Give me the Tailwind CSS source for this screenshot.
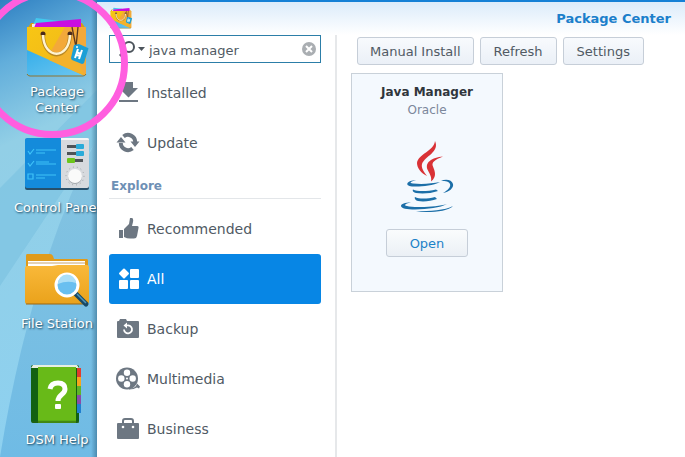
<!DOCTYPE html>
<html lang="en">
<head>
<meta charset="utf-8">
<meta name="viewport" content="width=device-width, initial-scale=1">
<title>Package Center</title>
<script src="https://cdn.jsdelivr.net/npm/@tailwindcss/browser@4"></script>
</head>
<body class="relative flex h-screen overflow-hidden bg-[#74bbe2] font-['DejaVu_Sans',Verdana,sans-serif] text-[#505a64]">

<!-- Reusable shopping bag artwork -->
<svg class="absolute size-0" aria-hidden="true">
  <defs>
    <linearGradient id="bagGold" x1="0" y1="0" x2="1" y2="1"><stop offset="0" stop-color="#f8c614"/><stop offset="1" stop-color="#eeb51c"/></linearGradient>
    <linearGradient id="bagBlue" x1="0" y1="0" x2="1" y2="1"><stop offset="0" stop-color="#35aeea"/><stop offset="1" stop-color="#6dc6f0"/></linearGradient>
  </defs>
  <symbol id="bag" viewBox="0 0 68 68">
    <path d="M4 13 8 7h51l4 6z" fill="#d89c12"/>
    <path d="M13 2 37 5 32 12H9z" fill="#43c8ee"/>
    <path d="M9 8 57 5l1 7H9z" fill="#f4eee6"/>
    <path d="M13 7 58 3v9H11z" fill="#c90fe0"/>
    <path d="M4 11h59v46q0 3-3 3H7q-3 0-3-3z" fill="url(#bagGold)"/>
    <path d="M42 11h21v46q0 3-3 3L28 35z" fill="#f3a93a"/>
    <path d="M4 34 62 60H7q-3 0-3-3z" fill="url(#bagBlue)"/>
    <path d="M26 44 48 31l14 29z" fill="#f3b22c"/>
    <path d="M4 58q1 2 3 2h53q2 0 3-2" fill="none" stroke="#8d7432" stroke-width="1"/>
    <circle cx="20" cy="18" r="2.500" fill="#4b2a1a"/><circle cx="47" cy="18" r="2.500" fill="#4b2a1a"/>
    <path d="M20 19c1 26 26 26 27 0" fill="none" stroke="#b88824" stroke-width="4"/>
    <path d="M20 19c1 25 26 25 27 0" fill="none" stroke="#fff3d2" stroke-width="2.500"/>
    <path d="M49 11 53 31 55 11" fill="none" stroke="#5b3a20" stroke-width="1.300"/>
    <path d="m51 29 5-1 9 4q1 0 0 2l-4 13q-1 1-2 1l-10-4q-1-1-1-2z" fill="#1b9fd6"/>
    <path d="m55 33-3 9m7-8-3 9m-3-7 5 2m-5 1 5 1" stroke="#fff" stroke-width="2" fill="none"/>
    <circle cx="54" cy="31" r="1" fill="#fff"/>
  </symbol>
</svg>

<!-- Desktop shortcuts -->
<aside class="relative w-[97px] shrink-0 overflow-hidden">
  <svg class="absolute inset-0 h-full w-full" viewBox="0 0 97 457" preserveAspectRatio="none" aria-hidden="true">
    <defs>
      <linearGradient id="skyA" x1="0" y1="0" x2=".1" y2="1"><stop offset="0" stop-color="#2f80c2"/><stop offset=".14" stop-color="#62aedb"/><stop offset=".32" stop-color="#92cfe6"/><stop offset="1" stop-color="#8ed1f0"/></linearGradient>
      <linearGradient id="skyB" x1="0" y1="0" x2="0" y2="1"><stop offset="0" stop-color="#86c4e0"/><stop offset="1" stop-color="#6fbbe5"/></linearGradient>
      <linearGradient id="edge"><stop offset="0" stop-color="#20506e" stop-opacity="0"/><stop offset="1" stop-color="#20506e" stop-opacity=".45"/></linearGradient>
    </defs>
    <path d="M0 0h97v457H0z" fill="url(#skyA)"/>
    <path d="M97 90 0 188v98L97 140z" fill="#7fc4e2" opacity=".8"/>
    <path d="M97 138Q30 270 0 457h97z" fill="url(#skyB)"/>
    <path d="M91 0h6v457h-6z" fill="url(#edge)"/>
  </svg>
  <ul class="relative w-[114px] pt-4 text-center text-[13px] leading-4 text-white [text-shadow:1px_1px_2px_#123c55]">
    <li class="h-[116px]"><a href="#package-center" class="flex flex-col items-center">
      <svg class="size-[68px]" aria-hidden="true"><use href="#bag"/></svg>
      <span class="w-16">Package Center</span></a></li>
    <li class="h-[116px]"><a href="#control-panel" class="flex flex-col items-center">
      <svg class="size-[68px]" viewBox="0 0 68 68" aria-hidden="true">
        <rect x="2" y="7" width="64" height="51" rx="2" fill="#27506b"/>
        <path d="M4 6h34v50H4q-2 0-2-2V8q0-2 2-2z" fill="#148bdb"/>
        <path d="M38 6h26q2 0 2 2v46q0 2-2 2H38z" fill="#d7dade"/>
        <path d="M38 6h26q2 0 2 2H38z" fill="#f4f6f7"/>
        <g fill="none" stroke="#3fc3f8" stroke-width="1.200"><path d="m5 19 2 3 4-5M5 31l2 3 4-5M5 42h5v5H5zM13 18h20M13 21h9M13 30h13M13 32h20M13 43h20M13 46h9"/></g>
        <path d="M44 13h16v3H44zm0 7h16v3H44zm0 7h16v3H44z" fill="#4e5357"/>
        <rect x="53" y="12" width="8" height="5" rx="1" fill="#2aabd9"/><rect x="53" y="19" width="8" height="5" rx="1" fill="#2aabd9"/><rect x="44" y="26" width="8" height="5" rx="1" fill="#6cc51c"/>
        <circle cx="52" cy="44" r="9" fill="none" stroke="#9da2a7" stroke-width="1" stroke-dasharray="1 3"/>
        <circle cx="52" cy="45" r="7" fill="#a4a9ad"/><circle cx="52" cy="44" r="7" fill="#fafafa"/>
      </svg>
      <span class="whitespace-nowrap">Control Panel</span></a></li>
    <li class="h-[116px]"><a href="#file-station" class="flex flex-col items-center">
      <svg class="size-[68px]" viewBox="0 0 68 68" aria-hidden="true">
        <defs><linearGradient id="fold" x1="0" y1="0" x2="0" y2="1"><stop offset="0" stop-color="#f9b93a"/><stop offset="1" stop-color="#eaa21b"/></linearGradient></defs>
        <path d="M4 6h23q2 0 3 2l1 3h33q1 0 1 2v10H3V8q0-2 1-2z" fill="#e09b1b"/>
        <path d="M5 13h57v6H5z" fill="#fff"/><path d="M5 15h57" stroke="#c8a46c"/>
        <path d="M4 18h25l6-1h29q2 0 2 2v35q0 2-2 2H4q-2 0-2-2V20q0-2 2-2z" fill="url(#fold)"/>
        <path d="M3 56h62" stroke="#9b6613"/>
        <path d="m53 46 10 10" stroke="#174966" stroke-width="5" stroke-linecap="round"/><path d="m54 46 9 9" stroke="#4f95bb" stroke-width="1.500"/>
        <circle cx="44" cy="37" r="11" fill="#69bff0" stroke="#fff" stroke-width="3"/>
        <path d="M35 36a9 9 0 0 1 18-1q-9-3-18 1z" fill="#acdff7"/>
      </svg>
      <span class="whitespace-nowrap">File Station</span></a></li>
    <li class="h-[116px]"><a href="#dsm-help" class="flex flex-col items-center">
      <svg class="size-[68px]" viewBox="0 0 68 68" aria-hidden="true">
        <rect x="8" y="1" width="48" height="58" rx="2" fill="#126112"/>
        <path d="M10 1h44l2 3H8z" fill="#e8efe2"/>
        <path d="M15 3h38v56H15z" fill="#5aad13"/><path d="M15 3h38v53H15z" fill="#68ba18"/><path d="M9 58h47" stroke="#2b6312"/>
        <path d="M54 4h4v9h-4z" fill="#e23b2e"/><path d="M54 13h4v9h-4z" fill="#f6a51d"/><path d="M54 22h4v9h-4z" fill="#5fb42a"/><path d="M54 31h4v9h-4z" fill="#8b4aa8"/><path d="M54 40h4v9h-4z" fill="#1f7fd0"/>
        <path d="M27 25q1-6 8-6t7 6c0 6-7 5-7 12" fill="none" stroke="#fff" stroke-width="5"/><rect x="32" y="40" width="6" height="5" rx="1" fill="#fff"/>
      </svg>
      <span class="whitespace-nowrap">DSM Help</span></a></li>
  </ul>
</aside>

<!-- Application window -->
<div class="flex min-w-0 flex-1 flex-col bg-linear-to-b from-[#d9eafa] to-white to-[35px]">
  <header class="flex h-[35px] shrink-0 items-center justify-between border-t-2 border-[#1580d6] pr-[14px] pl-3">
    <svg class="size-6" aria-hidden="true"><use href="#bag"/></svg>
    <h1 class="text-[13px] font-bold text-[#1b7fcb]">Package Center</h1>
  </header>
  <div class="flex min-h-0 flex-1">
    <nav class="w-[240px] shrink-0 overflow-hidden border-r-2 border-[#e6e8ea] pr-[14px] pl-3 text-sm" aria-label="Categories">
      <div class="flex h-7 items-center border border-[#2c7ea8] bg-white pr-1 pl-[9px]">
        <svg class="h-4 w-7 shrink-0" viewBox="0 0 28 16" aria-hidden="true"><circle cx="10" cy="6" r="5" fill="none" stroke="#4c545c" stroke-width="2"/><path d="m6 10-5 5" stroke="#4c545c" stroke-width="3"/><path d="M19 6h7l-3.500 4z" fill="#4c545c"/></svg>
        <label for="search" class="sr-only">Search packages</label>
        <input id="search" type="text" value="java manager" class="ml-0.5 h-6 min-w-0 flex-1 bg-transparent pt-0.5 text-[13px] outline-none">
        <button type="button" aria-label="Clear search"><svg class="size-[14px]" viewBox="0 0 14 14" aria-hidden="true"><circle cx="7" cy="7" r="7" fill="#aaaeb2"/><path d="m4 4 6 6m0-6-6 6" stroke="#fff" stroke-width="2"/></svg></button>
      </div>
      <ul class="mt-[5px]">
        <li><a href="#installed" class="flex h-[50px] items-center gap-2 pl-2">
          <svg class="size-[22px]" viewBox="0 0 22 22" fill="#6d7782" aria-hidden="true"><path d="M7 0h9v6h5l-9.500 9.500L2 6h5zM2 18h19v2H2z"/></svg>Installed</a></li>
        <li><a href="#update" class="flex h-[50px] items-center gap-2 pl-2">
          <svg class="size-[22px] overflow-visible" viewBox="0 0 22 22" aria-hidden="true"><g fill="none" stroke="#6d7782" stroke-width="4"><path d="M6.500 4.500A7.200 7.200 0 0 1 18.200 10M15.500 16.500A7.200 7.200 0 0 1 3.800 11"/></g><path d="M13.500 9.500h9L18 15zM8.500 10.500h-9L4 5z" fill="#6d7782"/></svg>Update</a></li>
      </ul>
      <h2 class="mt-2 mb-[5px] border-b border-[#e3e6e9] pb-[2px] pl-[2px] text-xs leading-5 font-bold text-[#6e90b5]">Explore</h2>
      <ul>
        <li><a href="#recommended" class="flex h-[50px] items-center gap-2 pl-2">
          <svg class="size-[22px]" viewBox="0 0 22 22" fill="#6d7782" aria-hidden="true"><path d="M2 12h4v8H2zM7 11l5-5 1-6q4-1 3 4l-1 4h5q2 0 1.500 2L20 18q-.5 2.500-3 2.500h-4q-3 0-6-1.500z"/></svg>Recommended</a></li>
        <li><a href="#all" aria-current="page" class="flex h-[50px] items-center gap-2 rounded-[3px] bg-[#0786e5] pl-2 text-white">
          <svg class="size-[22px]" viewBox="0 0 22 22" fill="#fff" aria-hidden="true"><rect x="3.200" y="1.700" width="7.600" height="7.600" rx="1" transform="rotate(45 7 5.500)"/><rect x="13" y="1" width="9" height="9" rx="1"/><rect x="2" y="12" width="9" height="9" rx="1"/><rect x="13" y="12" width="9" height="9" rx="1"/></svg>All</a></li>
        <li><a href="#backup" class="flex h-[50px] items-center gap-2 pl-2">
          <svg class="size-[22px]" viewBox="0 0 22 22" aria-hidden="true"><path d="M2 3 3 1h6l1 2h11q1 0 1 1v15q0 1-1 1H1q-1 0-1-1V4q0-1 1-1z" fill="#6d7782"/><path d="M10 7.500a4 4 0 1 1-3 4" fill="none" stroke="#fff" stroke-width="1.800"/><path d="m10 4.500v6L6.500 7.500z" fill="#fff"/></svg>Backup</a></li>
        <li><a href="#multimedia" class="flex h-[50px] items-center gap-2 pl-2">
          <svg class="size-[22px] overflow-visible" viewBox="0 0 22 22" aria-hidden="true"><circle cx="10" cy="10.500" r="11" fill="#6d7782"/><path d="M12 20.500q7 0 8-5l3 3-1 2-2-1q-3 2-8 2z" fill="#6d7782"/><g fill="#fff"><circle cx="10" cy="4.800" r="3.200"/><circle cx="4.300" cy="10.500" r="3.200"/><circle cx="15.700" cy="10.500" r="3.200"/><circle cx="10" cy="16.200" r="3.200"/><circle cx="10" cy="10.500" r="1"/></g></svg>Multimedia</a></li>
        <li><a href="#business" class="flex h-[50px] items-center gap-2 pl-2">
          <svg class="size-[22px]" viewBox="0 0 22 22" aria-hidden="true"><path d="M6 6V3q0-2 2-2h6q2 0 2 2v3" fill="none" stroke="#6d7782" stroke-width="2"/><rect y="5" width="22" height="16" rx="1" fill="#6d7782"/><circle cx="6" cy="9" r="1.300" fill="#fff"/><circle cx="16" cy="9" r="1.300" fill="#fff"/></svg>Business</a></li>
      </ul>
    </nav>
    <main class="min-w-0 flex-1 px-[14px] pt-[2px]">
      <div class="flex gap-[6px] pl-[6px] text-[13px]">
        <button type="button" class="h-7 rounded-[3px] border border-[#c6ced8] bg-linear-to-b from-[#f8fafd] to-[#ebf0f7] px-3 pt-px">Manual Install</button>
        <button type="button" class="h-7 rounded-[3px] border border-[#c6ced8] bg-linear-to-b from-[#f8fafd] to-[#ebf0f7] px-[13px] pt-px">Refresh</button>
        <button type="button" class="h-7 rounded-[3px] border border-[#c6ced8] bg-linear-to-b from-[#f8fafd] to-[#ebf0f7] px-[13px] pt-px">Settings</button>
      </div>
      <article class="mt-2 flex w-[152px] flex-col items-center border border-[#c9d1d9] bg-[#f4f9fe] pt-2 pb-[34px]">
        <h2 class="text-xs leading-5 font-bold text-[#30363c]">Java Manager</h2>
        <p class="text-xs leading-4 text-[#7b879b]">Oracle</p>
        <svg class="mt-5 h-[76px] w-16" viewBox="0 0 64 76" aria-hidden="true">
          <g fill="#d93236"><path d="M40 3c5 11-10 15-13 23-1 4 2 8 5 12-6-3-10-8-10-13 1-9 17-12 18-22z"/><path d="M48 18.500c-8 3-12 6-10 10 2 5 4 10-2 15 1-4-1-7-3-11-4-8 4-13 15-14z"/></g>
          <g fill="#1c6fa8"><path d="M21 42c-6 2-7 3-3 3.500 10 1 19 0 27-1.500-8 4-20 5-28 4.500-8-1-5-6 4-6.500z"/><path d="M46 43c5-2.500 11-1 12 3 1 4-4 8-10 9 5-3 8-6 7-9-1-2.500-4-3-9-3z"/><path d="M18 51.500c4 2 14 2 23 0l2 1.500c-7 2.500-16 3-22 2-2-.5-4-2-3-3.500z"/><path d="M20 59c4 2 12 2 20 0l2 2c-6 2-13 3-19 2-2-.5-4-2.500-3-4z"/><path d="M16 64.500c-7 1.500-8 3-2 4 14 1.500 29 0 38-2.500-7 4-19 5-32 5.500-8 0-14-1-14-3.500 0-2 4-3.500 10-3.500z"/><path d="M58 68c-5 6-25 7-37 5.500 14-.5 29-1 37-5.500z"/></g>
        </svg>
        <button type="button" class="mt-[15px] h-7 w-[82px] rounded-[3px] border border-[#c6ced8] bg-linear-to-b from-[#fafcfd] to-[#ebf0f5] pt-px text-[13px] text-[#1c82c8]">Open</button>
      </article>
    </main>
  </div>
</div>

<!-- Highlight ring drawn over the desktop and window -->
<svg class="pointer-events-none absolute top-0 left-0 h-[140px] w-[140px]" viewBox="0 0 140 140" aria-hidden="true"><ellipse cx="52.500" cy="63.500" rx="72" ry="71" fill="none" stroke="#ff5edf" stroke-width="7"/></svg>
</body>
</html>
